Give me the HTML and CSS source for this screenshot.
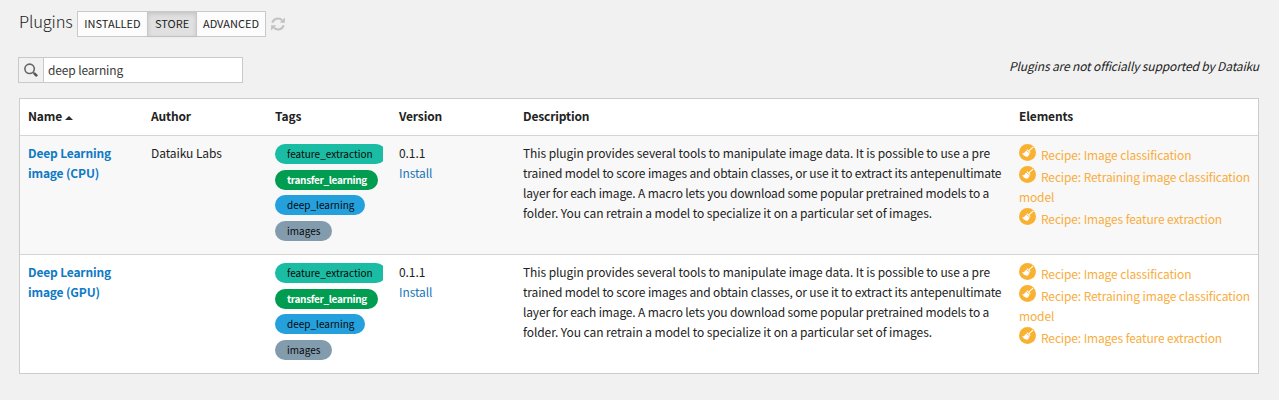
FILE: index.html
```html
<!DOCTYPE html>
<html lang="en">
<head>
<meta charset="utf-8">
<title>Plugins</title>
<link rel="stylesheet" href="styles.css">
</head>
<body>
<svg width="0" height="0" class="defs">
  <symbol id="broom" viewBox="0 0 17 17">
    <circle cx="8.5" cy="8.5" r="8.5" fill="#f9b132"/>
    <path d="M13.8 3.4L10.4 6.4" stroke="#fff" stroke-width="1.2" stroke-linecap="round"/>
    <path d="M8.2 5.3L11.6 8.3L10.9 9.1L7.5 6.1Z" fill="#fff"/>
    <path d="M7.1 6.4L10.6 9.5C10.2 11.1 9.1 12.4 7.9 13L6.9 12.2L6.4 12.6L5.5 11.7L4.7 11.8L4.5 10.8L2.8 9.8C4.7 9.2 6.2 8.2 7.1 6.4Z" fill="#fff"/>
  </symbol>
</svg>
<header class="topbar">
  <h1 class="title">Plugins</h1>
  <nav class="tabs">
    <a class="tab tab-installed">INSTALLED</a>
    <a class="tab tab-store active">STORE</a>
    <a class="tab tab-advanced">ADVANCED</a>
  </nav>
  <svg class="refresh" viewBox="0 0 14 14">
    <path d="M1.4 5.7A5.6 5.3 0 0 1 11 3.2M12.6 8.3A5.6 5.3 0 0 1 3 10.8" fill="none" stroke="#c2c2c2" stroke-width="2.1"/>
    <path d="M13.9 0.5V5.7H8.7ZM0.1 13.5V8.3H5.3Z" fill="#c2c2c2"/>
  </svg>
</header>
<div class="toolbar">
  <label class="search">
    <span class="search-icon"><svg width="16" height="16" viewBox="0 0 16 16"><circle cx="6.6" cy="5.8" r="4.7" fill="none" stroke="#666" stroke-width="1.6"/><path d="M10 9.2L11 10.2" stroke="#666" stroke-width="1.6"/><path d="M11 10.1L14.1 13.1" stroke="#555" stroke-width="2.6"/></svg></span>
    <span class="search-value">deep learning</span>
  </label>
  <em class="notice">Plugins are not officially supported by Dataiku</em>
</div>
<main class="table">
  <div class="row head">
    <div>Name<i class="caret"></i></div><div>Author</div><div>Tags</div><div>Version</div><div>Description</div><div>Elements</div>
  </div>
  <div class="row striped">
    <div class="name">Deep Learning<br>image (CPU)</div>
    <div>Dataiku Labs</div>
    <div class="tags"><span class="tag feature">feature_extraction</span><span class="tag transfer">transfer_learning</span><span class="tag deep">deep_learning</span><span class="tag images">images</span></div>
    <div>0.1.1<br><a class="install">Install</a></div>
    <div class="desc">This plugin provides several tools to manipulate image data. It is possible to use a pre<br><span class="tight">trained model to score images and obtain classes, or use it to extract its antepenultimate<br>layer for each image. A macro lets you download some popular pretrained models to a</span><br>folder. You can retrain a model to specialize it on a particular set of images.</div>
    <div class="elements">
      <p class="line"><svg class="broom"><use href="#broom"/></svg>Recipe: Image classification</p>
      <p class="line"><svg class="broom"><use href="#broom"/></svg>Recipe: Retraining image classification</p>
      <p class="rest">model</p>
      <p class="line"><svg class="broom"><use href="#broom"/></svg>Recipe: Images feature extraction</p>
    </div>
  </div>
  <div class="row">
    <div class="name">Deep Learning<br>image (GPU)</div>
    <div></div>
    <div class="tags"><span class="tag feature">feature_extraction</span><span class="tag transfer">transfer_learning</span><span class="tag deep">deep_learning</span><span class="tag images">images</span></div>
    <div>0.1.1<br><a class="install">Install</a></div>
    <div class="desc">This plugin provides several tools to manipulate image data. It is possible to use a pre<br><span class="tight">trained model to score images and obtain classes, or use it to extract its antepenultimate<br>layer for each image. A macro lets you download some popular pretrained models to a</span><br>folder. You can retrain a model to specialize it on a particular set of images.</div>
    <div class="elements">
      <p class="line"><svg class="broom"><use href="#broom"/></svg>Recipe: Image classification</p>
      <p class="line"><svg class="broom"><use href="#broom"/></svg>Recipe: Retraining image classification</p>
      <p class="rest">model</p>
      <p class="line"><svg class="broom"><use href="#broom"/></svg>Recipe: Images feature extraction</p>
    </div>
  </div>
</main>
</body>
</html>
```
FILE: styles.css
```css
* { box-sizing: border-box; }
body {
  margin: 0;
  height: 400px;
  overflow: hidden;
  background: #f1f1f1;
  color: #222;
  font: 12px/20px "Noto Sans CJK SC", "Open Sans", sans-serif;
  letter-spacing: -0.08px;
  white-space: nowrap;
}
.defs { display: block; }
.topbar { display: flex; height: 37px; padding: 11px 0 0 19px; }
.title { width: 58px; margin: 0; font-size: 16.5px; line-height: 21px; font-weight: 300; letter-spacing: -0.15px; }
.tabs { display: flex; height: 26px; border: 1px solid #c9c9c9; background: #fcfcfc; }
.tab { font-size: 11px; line-height: 23px; letter-spacing: 0; text-align: center; color: #222; }
.tab-installed { width: 69px; }
.tab-store { width: 50px; }
.tab-advanced { width: 68px; }
.tab.active {
  background: #e0e0e0;
  border: solid #c9c9c9;
  border-width: 0 1px;
  box-shadow: inset 0 2px 4px rgba(0, 0, 0, .13), 0 1px 2px rgba(0, 0, 0, .06);
}
.refresh { width: 14px; height: 14px; margin: 6px 0 0 5px; }
.toolbar { display: flex; justify-content: space-between; height: 61px; padding: 20px 19px 0 18px; }
.search { display: flex; width: 225px; height: 26px; border: 1px solid #c9c9c9; background: #fff; }
.search-icon { width: 25px; padding: 5px 0 0 4px; background: #f1f1f1; border-right: 1px solid #c9c9c9; line-height: 0; }
.search-value { padding-left: 4px; line-height: 23px; letter-spacing: -0.14px; color: #3a3a3a; }
.notice { line-height: 18px; margin-right: 1px; letter-spacing: -0.14px; }
.table { width: 1240px; margin-left: 19px; border: 1px solid #ccc; background: #fff; }
.row {
  display: grid;
  grid-template-columns: 123px 124px 124px 124px 496px 247px;
  height: 119px;
  padding-top: 7px;
  border-top: 1px solid #d5d5d5;
}
.row > div { padding-left: 8px; }
.row.head { height: 36px; border: 0; font-weight: 700; letter-spacing: -0.15px; }
.striped { background: #f8f8f8; }
.caret {
  display: inline-block;
  margin-left: 3px;
  border: solid transparent;
  border-width: 0 4px 4px;
  border-bottom-color: #2b2b2b;
  vertical-align: 1px;
}
.name { color: #0f7ac4; font-weight: 700; letter-spacing: -0.16px; }
.install { color: #1a75b8; }
.tight { letter-spacing: -0.155px; }
.row > .tags { display: flex; flex-direction: column; margin-right: 8px; padding-top: 1px; overflow: hidden; }
.tag { height: 20px; margin-bottom: 6px; padding-left: 12px; border-radius: 10px; font-size: 10px; letter-spacing: 0; color: #080808; }
.feature { width: 111px; background: #1abca3; }
.transfer { width: 103px; margin-bottom: 5px; background: #009c50; color: #fff; font-weight: 700; letter-spacing: -0.35px; }
.deep { width: 90px; background: #24a0dc; }
.images { width: 57px; background: #839cad; }
.row > .elements { padding-top: 1px; color: #f9ad3d; letter-spacing: -0.13px; }
.elements p { margin: 0; }
.line { display: flex; height: 22px; line-height: 22px; }
.elements .rest { height: 20px; line-height: 18px; }
.broom { width: 17px; height: 17px; margin-right: 5px; flex: none; }
```
